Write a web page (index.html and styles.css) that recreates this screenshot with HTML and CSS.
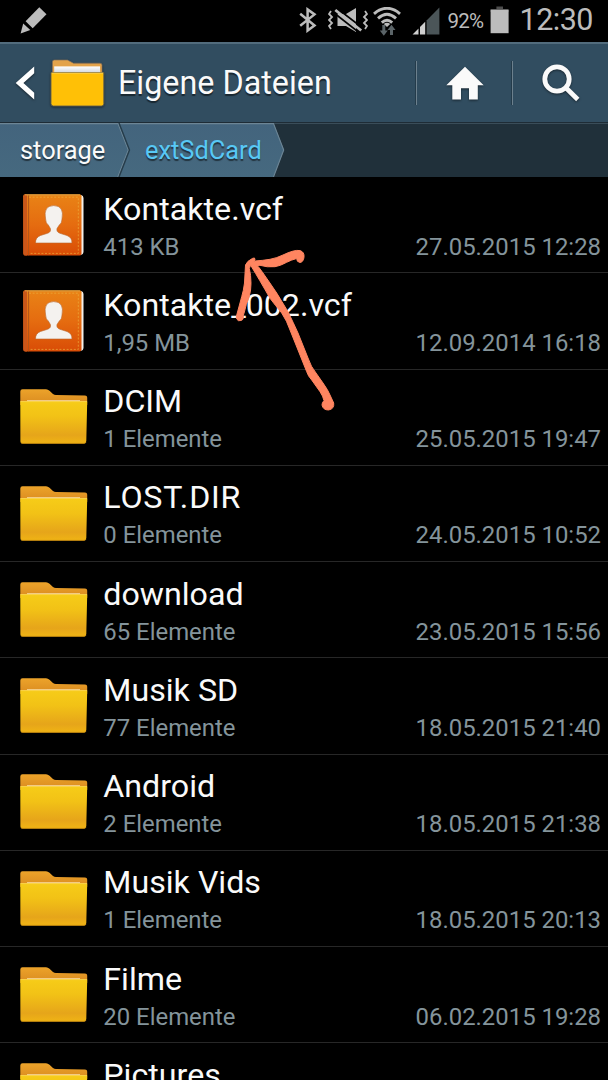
FILE: index.html
```html
<!DOCTYPE html>
<html lang="de">
<head>
    <meta charset="UTF-8">
    <meta name="viewport" content="width=device-width, initial-scale=1.0">
    <title>Eigene Dateien</title>
    <link rel="stylesheet" href="styles.css">
</head>
<body>
    <svg class="sprites" width="0" height="0" aria-hidden="true">
        <defs>
            <linearGradient id="folderFront" x1="0" y1="0" x2="0" y2="1">
                <stop offset="0" stop-color="#f6cc18"/>
                <stop offset="0.35" stop-color="#f2c216"/>
                <stop offset="0.8" stop-color="#e6a51a"/>
                <stop offset="1" stop-color="#f0b414"/>
            </linearGradient>
            <linearGradient id="folderBack" x1="0" y1="0" x2="0" y2="1">
                <stop offset="0" stop-color="#eca32a"/>
                <stop offset="1" stop-color="#d98a20"/>
            </linearGradient>
            <linearGradient id="bookCover" x1="0" y1="0" x2="0" y2="1">
                <stop offset="0" stop-color="#e98316"/>
                <stop offset="0.5" stop-color="#e56c10"/>
                <stop offset="1" stop-color="#d94c06"/>
            </linearGradient>
            <linearGradient id="paper" x1="0" y1="0" x2="0" y2="1">
                <stop offset="0" stop-color="#ffffff"/>
                <stop offset="1" stop-color="#c4ccd6"/>
            </linearGradient>
            <symbol id="folder" viewBox="0 0 68 56">
                <path d="M0.3 14V2.5Q0.3 0.3 2.5 0.3H26Q28 0.3 29.5 1.8L33 5Q34.2 6 36 6L65 6.6Q67.2 6.6 67.2 8.6V16H0.3Z" fill="url(#folderBack)"/>
                <path d="M7 11.9H60" stroke="#fff0c8" stroke-width="1"/>
                <path d="M0.3 12.6H67.2L66.3 52Q66.2 54.6 64 54.6H2.8Q0.4 54.6 0.4 52Z" fill="url(#folderFront)"/>
                <path d="M0.5 12.6H67" stroke="#fbd64a" stroke-width="1"/>
                <path d="M1 53.6Q2 54.4 3 54.4H64Q65.5 54.4 66 53" fill="none" stroke="#c98c12" stroke-width="0.8"/>
            </symbol>
            <symbol id="contact" viewBox="0 0 62 62">
                <path d="M55 1H58Q60.5 1.5 60.5 4V57.5Q60.5 60.5 57.5 61H55Z" fill="#f4f0ea"/>
                <rect x="0.3" y="0.3" width="58.2" height="61.2" rx="2" fill="url(#bookCover)"/>
                <path d="M0.3 2.5Q0.3 0.3 2.5 0.3H4V61.5H2.5Q0.3 61.5 0.3 59Z" fill="#c9561a"/>
                <path d="M5.6 0.5V61.3" stroke="#b0561c" stroke-width="1"/>
                <path d="M2 0.9H57" stroke="#d9a54c" stroke-width="0.9"/>
                <path d="M6 3.2H55.3V59.4H6" fill="none" stroke="#edae3c" stroke-width="0.7" stroke-dasharray="2 1.6"/>
                <path d="M12.5 49Q12.3 43.5 17.5 41.5L24.5 39.3Q28.3 38 27.4 34.5L25.3 31Q22.8 29.5 22.6 25Q20 11.7 30.7 11.6Q41.5 11.7 39 25Q38.8 29.5 36.3 31L34 34.5Q33.2 38 37 39.3L44 41.5Q49.2 43.5 49 49Z" fill="#f4f2ef" stroke="#b9662c" stroke-width="0.6"/>
            </symbol>
        </defs>
    </svg>

    <div class="status-bar">
        <svg class="pen" width="28" height="28" viewBox="0 0 28 28">
            <path d="M5.6 15.2L19.3 1.2L26.5 8.2L12.7 22.2Z" fill="#bcbcbc"/>
            <path d="M3.2 17.6L10.3 24L0.6 27.6Z" fill="#bcbcbc"/>
        </svg>
        <div class="status-icons">
            <svg width="18" height="26" viewBox="0 0 18 26">
                <path d="M1.2 6.8L15.5 18.5L8.6 23.6V2.4L15.5 7.4L1.2 18.8" fill="none" stroke="#bcbcbc" stroke-width="2.5"/>
            </svg>
            <svg class="mute" width="40" height="26" viewBox="0 0 40 26">
                <path d="M3 4L1 7L4 10L1 13L4 16L1 19L3 22M37 4L39 7L36 10L39 13L36 16L39 19L37 22" fill="none" stroke="#bcbcbc" stroke-width="1.8"/>
                <path d="M9.5 7H18L28 1V25L18 19H9.5Z" fill="#bcbcbc"/>
                <path d="M9.5 1.7L34.5 20.9" stroke="#000" stroke-width="1.8"/>
                <path d="M7.3 3L33.2 23.5" stroke="#bcbcbc" stroke-width="2.8"/>
                <path d="M5.5 5.5L31.5 26" stroke="#000" stroke-width="1.6"/>
            </svg>
            <svg class="wifi" width="28" height="29" viewBox="0 0 28 29">
                <path d="M1 6.8Q14 -4.2 27 6.8M5 11.4Q14 3.2 23 11.4M8.8 15.6Q14 10.8 19.2 15.6" fill="none" stroke="#bcbcbc" stroke-width="2.9"/>
                <path d="M10.8 17Q14 14.5 17.2 17L14 20Z" fill="#bcbcbc"/>
                <path d="M10.8 18V24M18.5 28V22" stroke="#5b6468" stroke-width="3"/>
                <path d="M6.8 23.5H14.8L10.8 28.8ZM14.5 23H22.5L18.5 17.8Z" fill="#5b6468"/>
            </svg>
            <svg class="signal" width="28" height="28" viewBox="0 0 28 28">
                <path d="M14.6 13.4L27.4 0.5V27.5H14.6Z" fill="#4b5558"/>
                <path d="M0.5 27.5L6.5 21.4V27.5ZM8 20L13.2 14.7V27.5H8Z" fill="#cfcfcf"/>
            </svg>
            <span class="percent">92%</span>
            <svg class="battery" width="19" height="28" viewBox="0 0 19 28">
                <path d="M6.4 0.5H13V3H18.5V6H0.6V3H6.4Z" fill="#4d4d4d"/>
                <rect x="0.6" y="3.8" width="18" height="23.4" fill="#bcbcbc"/>
            </svg>
            <span class="clock">12:30</span>
        </div>
    </div>

    <div class="action-bar">
        <svg class="back" width="20" height="34" viewBox="0 0 20 34">
            <path d="M19.2 0.5V7.3L8.4 17L19.2 26.7V33.5L0.7 17Z" fill="#fff"/>
        </svg>
        <svg class="app-icon" width="55" height="48" viewBox="0 0 55 48">
            <path d="M2.4 15V3Q2.4 1 4.4 1H17.5L23.5 4.2H50Q52 4.2 52 6V15Z" fill="#e3a34a" stroke="#85705a" stroke-width="0.7"/>
            <rect x="4.2" y="7.4" width="45.8" height="8" fill="url(#paper)"/>
            <path d="M1 13.6H53.8V44.6Q53.8 47 51.5 47H3.3Q1 47 1 44.6Z" fill="#ffc006" stroke="#67614b" stroke-width="0.9"/>
            <path d="M1.8 14.2H53" stroke="#ffd34a" stroke-width="1"/>
        </svg>
        <h1 class="title">Eigene Dateien</h1>
        <button class="action home" aria-label="Startseite">
            <svg width="38" height="35" viewBox="0 0 38 35">
                <path d="M19 0.7L37.7 19.3H31.8V33.5H23V22.2H15V33.5H6.3V19.3H0.3Z" fill="#fafafa"/>
            </svg>
        </button>
        <button class="action search" aria-label="Suchen">
            <svg width="38" height="38" viewBox="0 0 38 38">
                <circle cx="15" cy="15" r="12.2" fill="none" stroke="#fafafa" stroke-width="4.8"/>
                <path d="M23.6 23.6L35.8 35.4" stroke="#fafafa" stroke-width="4.8"/>
            </svg>
        </button>
    </div>

    <div class="breadcrumb">
        <svg class="crumb-shape" width="288" height="54" viewBox="0 0 288 54">
            <defs>
                <linearGradient id="crumbFill" x1="0" y1="0" x2="0" y2="1">
                    <stop offset="0" stop-color="#43647d"/>
                    <stop offset="1" stop-color="#46697f"/>
                </linearGradient>
            </defs>
            <path d="M0 0H273.5L284 27L273.5 54H0Z" fill="url(#crumbFill)"/>
            <path d="M0 0.6H273.5L283.7 27L273.5 54" fill="none" stroke="#6c8595" stroke-width="1.1"/>
            <path d="M117.8 0L128.3 27L117.8 54" fill="none" stroke="#6c8595" stroke-width="1.1"/>
            <path d="M119 0L129.5 27L119 54" fill="none" stroke="#263c4a" stroke-width="1.4"/>
        </svg>
        <span class="crumb">storage</span>
        <span class="crumb current">extSdCard</span>
    </div>

    <div class="file-list">
        <div class="file">
            <svg class="file-icon book"><use href="#contact"/></svg>
            <div class="file-text">
                <div class="name">Kontakte.vcf</div>
                <div class="details"><span>413 KB</span><span>27.05.2015 12:28</span></div>
            </div>
        </div>
        <div class="file">
            <svg class="file-icon book"><use href="#contact"/></svg>
            <div class="file-text">
                <div class="name">Kontakte_002.vcf</div>
                <div class="details"><span>1,95 MB</span><span>12.09.2014 16:18</span></div>
            </div>
        </div>
        <div class="file">
            <svg class="file-icon"><use href="#folder"/></svg>
            <div class="file-text">
                <div class="name">DCIM</div>
                <div class="details"><span>1 Elemente</span><span>25.05.2015 19:47</span></div>
            </div>
        </div>
        <div class="file">
            <svg class="file-icon"><use href="#folder"/></svg>
            <div class="file-text">
                <div class="name wide">LOST.DIR</div>
                <div class="details"><span>0 Elemente</span><span>24.05.2015 10:52</span></div>
            </div>
        </div>
        <div class="file">
            <svg class="file-icon"><use href="#folder"/></svg>
            <div class="file-text">
                <div class="name">download</div>
                <div class="details"><span>65 Elemente</span><span>23.05.2015 15:56</span></div>
            </div>
        </div>
        <div class="file">
            <svg class="file-icon"><use href="#folder"/></svg>
            <div class="file-text">
                <div class="name">Musik SD</div>
                <div class="details"><span>77 Elemente</span><span>18.05.2015 21:40</span></div>
            </div>
        </div>
        <div class="file">
            <svg class="file-icon"><use href="#folder"/></svg>
            <div class="file-text">
                <div class="name">Android</div>
                <div class="details"><span>2 Elemente</span><span>18.05.2015 21:38</span></div>
            </div>
        </div>
        <div class="file">
            <svg class="file-icon"><use href="#folder"/></svg>
            <div class="file-text">
                <div class="name">Musik Vids</div>
                <div class="details"><span>1 Elemente</span><span>18.05.2015 20:13</span></div>
            </div>
        </div>
        <div class="file">
            <svg class="file-icon"><use href="#folder"/></svg>
            <div class="file-text">
                <div class="name">Filme</div>
                <div class="details"><span>20 Elemente</span><span>06.02.2015 19:28</span></div>
            </div>
        </div>
        <div class="file">
            <svg class="file-icon"><use href="#folder"/></svg>
            <div class="file-text">
                <div class="name">Pictures</div>
            </div>
        </div>
    </div>

    <!-- hand-drawn arrow on top of the list -->
    <svg class="arrow" width="110" height="170" viewBox="230 245 110 170">
        <g fill="#ff8560" stroke="#ff8560" stroke-width="1" stroke-linejoin="round">
            <path d="M250 262L255 263.3Q259 267 263 273Q270 283 276.7 293L288 311.7Q293 322 298 333L308 358Q311 367 316 373L323 383Q328 390 330 395L333.7 403Q334.5 409 328.5 410Q323 410 322 405Q322 402 324 400.7Q323 396 320 391.7L311.7 380Q308 376 306.7 371.7L290 330Q287 321 281.7 313Q275 305 270 298.3Q259 279 251.7 267Z"/>
            <path d="M251 263L255 261Q263 260.5 270 259.3Q277 258 283 255Q288 252.5 293.3 251Q297 250 300 250.6Q304.5 252 304 257Q303.5 262 300 262.5Q296.5 262 296.7 258.5Q291 260 286.7 262.3Q280 266 275 266.7Q267 267.5 260 265.3L252 266Z"/>
            <path d="M254.5 258L252.7 258.3Q247 261 245.5 265Q245 274 244.5 283Q243.5 291 241.7 296.7L237 314Q235.500 318 237 319.3Q238 321.5 241 320.5Q243 320 243.3 318Q243 315 244 313.3Q246 304 249.3 296.7Q251 290 251 283.3Q251 275 249.3 268.3Q251 263 255 260Z"/>
        </g>
    </svg>
</body>
</html>
```
FILE: styles.css
```css
* {
    box-sizing: border-box;
}

body {
    position: relative;
    display: flex;
    flex-direction: column;
    margin: 0;
    width: 608px;
    height: 1080px;
    overflow: hidden;
    background-color: #000;
    color: #fafafa;
    font-family: Roboto, "Noto Sans", sans-serif;
}

svg {
    display: block;
    flex-shrink: 0;
}

.sprites {
    position: absolute;
}

/* Status bar */
.status-bar {
    display: flex;
    flex-shrink: 0;
    justify-content: space-between;
    height: 42px;
    padding: 6px 14px 0 20px;
    color: #bcbcbc;
}

.status-icons {
    display: flex;
    align-items: flex-start;
}

.status-icons svg {
    margin-top: 1px;
}

.mute {
    margin-left: 11px;
}

.wifi {
    margin-left: 5px;
}

.signal {
    margin-left: 11px;
}

.percent {
    margin-left: 8px;
    width: 42px;
    font-size: 20.5px;
    line-height: 30px;
    letter-spacing: -0.8px;
    white-space: nowrap;
}

.status-icons .battery {
    margin-top: 0;
}

.clock {
    margin-left: 11px;
    width: 74.5px;
    font-size: 30.5px;
    line-height: 28px;
    letter-spacing: -0.5px;
    white-space: nowrap;
}

/* Title bar */
.action-bar {
    display: flex;
    flex-shrink: 0;
    align-items: center;
    height: 81px;
    padding-left: 15px;
    border-top: 2px solid #526c7d;
    border-bottom: 1px solid #1e2c36;
    background-color: #314d60;
}

.back,
.app-icon,
.action svg {
    filter: drop-shadow(0 1px 1px rgba(0, 0, 0, 0.5));
}

.app-icon {
    margin-left: 15px;
}

.title {
    flex: 1;
    margin: 0 0 0 13px;
    font-size: 32.3px;
    font-weight: 400;
    text-shadow: 0 2px 1px rgba(0, 0, 0, 0.5);
}

.action {
    display: flex;
    align-items: center;
    justify-content: center;
    width: 96px;
    height: 44px;
    padding: 0;
    border: none;
    border-left: 1px solid #6c808d;
    background: none;
    box-shadow: -1px 0 0 #243b4a;
    cursor: pointer;
}

/* Path */
.breadcrumb {
    position: relative;
    display: flex;
    flex-shrink: 0;
    height: 54px;
    padding-left: 20px;
    border-top: 1px solid #3a4d59;
    background-color: #20303a;
    font-size: 25.4px;
    line-height: 52px;
    text-shadow: 0 2px 1px rgba(0, 0, 0, 0.5);
}

.crumb-shape {
    position: absolute;
    left: 0;
    top: -1px;
}

.crumb {
    position: relative;
    width: 125px;
}

.current {
    color: #58c8f5;
}

/* Files */
.file-list {
    flex: 1;
    min-height: 0;
    overflow: hidden;
}

.file {
    display: flex;
    height: 96.25px;
    padding: 12.6px 7px 0 20px;
    border-bottom: 1px solid #272727;
}

.file-icon {
    width: 68px;
    height: 56px;
    margin-top: 7.4px;
}

.file-icon.book {
    width: 62px;
    height: 62px;
    margin: 4px 3px 0;
}

.file-text {
    flex: 1;
    margin-left: 15.3px;
}

.name {
    font-size: 32.2px;
    line-height: 38px;
}

.name.wide {
    letter-spacing: 0.8px;
}

.details {
    display: flex;
    justify-content: space-between;
    color: #84949b;
    font-size: 23.9px;
    line-height: 38px;
}

.arrow {
    position: absolute;
    left: 230px;
    top: 245px;
}
```
